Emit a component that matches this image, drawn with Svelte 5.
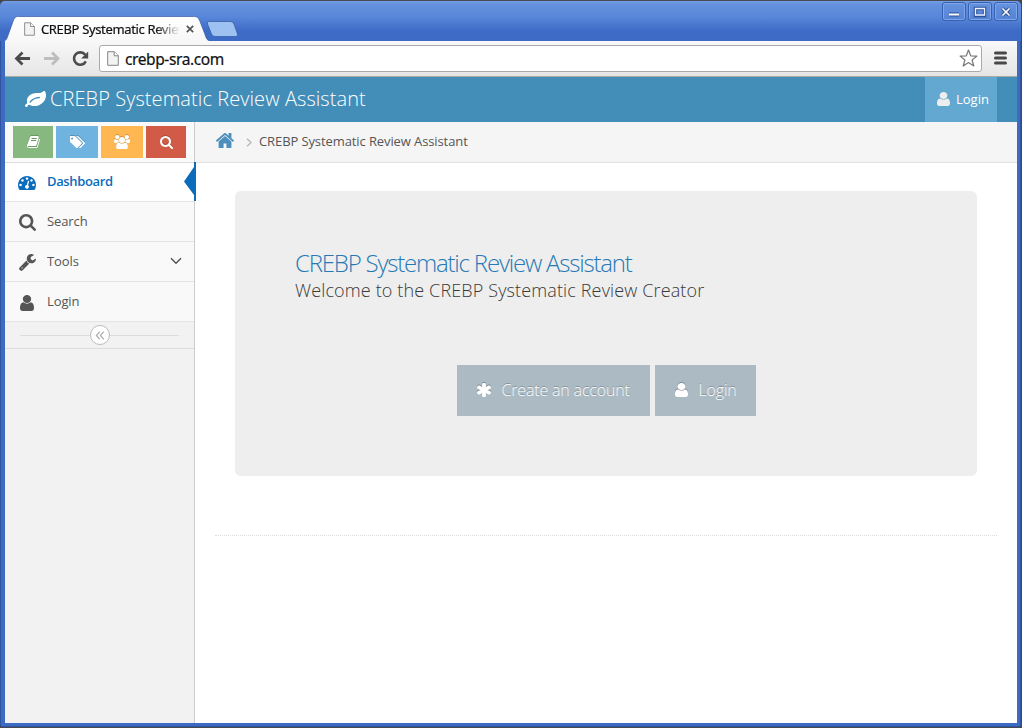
<script>
  const paths = {
    user: 'M1536 1399q0 109-62.5 187t-150.5 78h-854q-88 0-150.5-78t-62.5-187q0-85 8.5-160.5t31.5-152 58.5-131 94-89 134.5-34.5q131 128 313 128t313-128q76 0 134.5 34.5t94 89 58.5 131 31.5 152 8.5 160.5zm-256-887q0 159-112.5 271.5t-271.5 112.5-271.5-112.5-112.5-271.5 112.5-271.5 271.5-112.5 271.5 112.5 112.5 271.5z',
    search: 'M1216 832q0-185-131.5-316.5t-316.5-131.5-316.5 131.5-131.5 316.5 131.5 316.5 316.5 131.5 316.5-131.5 131.5-316.5zm512 832q0 52-38 90t-90 38q-54 0-90-38l-343-342q-179 124-399 124-143 0-273.5-55.5t-225-150-150-225-55.5-273.5 55.5-273.5 150-225 225-150 273.5-55.5 273.5 55.5 225 150 150 225 55.5 273.5q0 220-124 399l343 343q37 37 37 90z',
    dash: 'M384 1152q0-53-37.5-90.5t-90.5-37.5-90.5 37.5-37.5 90.5 37.5 90.5 90.5 37.5 90.5-37.5 37.5-90.5zm192-448q0-53-37.5-90.5t-90.5-37.5-90.5 37.5-37.5 90.5 37.5 90.5 90.5 37.5 90.5-37.5 37.5-90.5zm428 481l101-382q6-26-7.5-48.5t-38.5-29.5-48 6.5-30 39.5l-101 382q-60 5-107 43.5t-63 98.5q-20 77 20 146t117 89 146-20 89-117q16-60-6-117t-72-91zm660-33q0-53-37.5-90.5t-90.5-37.5-90.5 37.5-37.5 90.5 37.5 90.5 90.5 37.5 90.5-37.5 37.5-90.5zm-640-640q0-53-37.5-90.5t-90.5-37.5-90.5 37.5-37.5 90.5 37.5 90.5 90.5 37.5 90.5-37.5 37.5-90.5zm448 192q0-53-37.5-90.5t-90.5-37.5-90.5 37.5-37.5 90.5 37.5 90.5 90.5 37.5 90.5-37.5 37.5-90.5zm320 448q0 261-141 483-19 29-54 29h-1402q-35 0-54-29-141-221-141-483 0-182 71-348t191-286 286-191 348-71 348 71 286 191 191 286 71 348z',
    wrench: 'M448 1472q0-26-19-45t-45-19-45 19-19 45 19 45 45 19 45-19 19-45zm644-420l-682 682q-37 37-90 37-52 0-91-37l-106-108q-38-36-38-90 0-53 38-91l681-681q39 98 114.5 173.5t173.5 114.5zm634-435q0 39-23 106-47 134-164.5 217.5t-258.5 83.5q-185 0-316.5-131.5t-131.5-316.5 131.5-316.5 316.5-131.5q58 0 121.5 16.5t107.5 46.5q16 11 16 28t-16 28l-293 169v224l193 107q5-3 79-48.5t135.5-81 70.5-35.5q15 0 23.5 10t8.5 25z',
    asterisk: 'M1546 1050q46 26 59.5 77.5t-12.5 97.5l-64 110q-26 46-77.5 59.5t-97.5-12.5l-266-153v307q0 52-38 90t-90 38h-128q-52 0-90-38t-38-90v-307l-266 153q-46 26-97.5 12.5t-77.5-59.5l-64-110q-26-46-12.5-97.5t59.5-77.5l266-154-266-154q-46-26-59.5-77.5t12.5-97.5l64-110q26-46 77.5-59.5t97.5 12.5l266 153v-307q0-52 38-90t90-38h128q52 0 90 38t38 90v307l266-153q46-26 97.5-12.5t77.5 59.5l64 110q26 46 12.5 97.5t-59.5 77.5l-266 154z',
    home: 'M1472 992v480q0 26-19 45t-45 19h-384v-384h-256v384h-384q-26 0-45-19t-19-45v-480q0-1 .5-3t.5-3l575-474 575 474q1 2 1 6zm223-69l-62 74q-8 9-21 11h-3q-13 0-21-7l-692-577-692 577q-12 8-24 7-13-2-21-11l-62-74q-8-10-7-23.5t11-21.5l719-599q32-26 76-26t76 26l244 204v-195q0-14 9-23t23-9h192q14 0 23 9t9 23v408l219 182q10 8 11 21.5t-7 23.5z',
    leaf: 'M1280 704q0-26-19-45t-45-19q-172 0-318 49.5t-259.5 134-235.5 219.5q-19 21-19 45 0 26 19 45t45 19q24 0 45-19 27-24 74-71t67-66q137-124 268.5-176t313.5-52q26 0 45-19t19-45zm512-198q0 95-20 193-46 224-184.5 383t-357.5 268q-214 108-438 108-148 0-286-47-15-5-88-42t-96-37q-16 0-39.5 32t-45 70-52.5 70-60 32q-43 0-63.5-17.5t-45.5-59.5q-2-4-6-11t-5.5-10-3-9.5-1.5-13.5q0-35 31-73.5t68-65.5 68-56 31-48q0-4-14-38t-16-44q-9-51-9-104 0-115 43.5-220t119-184.5 170.5-139 204-95.5q55-18 145-25.5t179.5-9 178.5-6 163.5-24 113.5-56.5l29.5-29.5 29.5-28 27-20 36.5-16 43.5-4.5q39 0 70.5 46t47.5 112 24 124 8 96z',
    tags: 'M448 448q0-53-37.5-90.5t-90.5-37.5-90.5 37.5-37.5 90.5 37.5 90.5 90.5 37.5 90.5-37.5 37.5-90.5zm1067 576q0 53-37 90l-491 492q-39 37-91 37-53 0-90-37l-715-716q-38-37-64.5-101t-26.5-117v-416q0-52 38-90t90-38h416q53 0 117 26.5t102 64.5l715 714q37 39 37 91zm384 0q0 53-37 90l-491 492q-39 37-91 37-36 0-59-14t-53-45l470-470q37-37 37-90 0-52-37-91l-715-714q-38-38-102-64.5t-117-26.5h224q53 0 117 26.5t102 64.5l715 714q37 39 37 91z',
    book: 'M1703 478q40 57 18 129l-275 906q-19 64-76.5 107.5t-122.5 43.5h-923q-77 0-148.5-53.5t-99.5-131.5q-24-67-2-127 0-4 3-27t4-37q1-8-3-21.5t-3-19.5q2-11 8-21t16.5-23.5 16.5-23.5q23-38 45-91.5t30-91.5q3-10 .5-30t-.5-28q3-11 17-28t17-23q21-36 42-92t25-90q1-9-2.5-32t.5-28q4-13 22-30.5t22-22.5q19-26 42.5-84.5t27.5-96.5q1-8-3-25.5t-2-26.5q2-8 9-18t18-23 17-21q8-12 16.5-30.5t15-35 16-36 19.5-32 26.5-23.5 36-11.5 47.5 5.5l-1 3q38-9 51-9h761q74 0 114 56t18 130l-274 906q-36 119-71.5 153.5t-128.5 34.5h-869q-27 0-38 15-11 16-1 43 24 70 144 70h923q29 0 56-15.5t35-41.5l300-987q7-22 5-57 38 15 59 43zm-1064 2q-4 13 2 22.5t20 9.5h608q13 0 25.5-9.5t16.5-22.5l21-64q4-13-2-22.5t-20-9.5h-608q-13 0-25.5 9.5t-16.5 22.5zm-83 256q-4 13 2 22.5t20 9.5h608q13 0 25.5-9.5t16.5-22.5l21-64q4-13-2-22.5t-20-9.5h-608q-13 0-25.5 9.5t-16.5 22.5z',
    users: 'M657 896q-162 5-265 128h-134q-82 0-138-40.5t-56-118.5q0-353 124-353 6 0 43.5 21t97.5 42.5 119 21.5q67 0 133-23-5 37-5 66 0 159 93 290zm1071 637q0 120-73 189.5t-194 69.5h-874q-121 0-194-69.5t-73-189.5q0-53 3.5-103.5t14-109 26.5-108.5 43-97.5 62-81 85.5-53.5 111.5-20q10 0 43 21.5t73 48 107 48 135 21.5 135-21.5 107-48 73-48 43-21.5q61 0 111.5 20t85.5 53.5 62 81 43 97.5 26.5 108.5 14 109 3.5 103.5zm-1024-1277q0 106-75 181t-181 75-181-75-75-181 75-181 181-75 181 75 75 181zm704 384q0 159-112.5 271.5t-271.5 112.5-271.5-112.5-112.5-271.5 112.5-271.5 271.5-112.5 271.5 112.5 112.5 271.5zm576 225q0 78-56 118.5t-138 40.5h-134q-103-123-265-128 93-131 93-290 0-29-5-66 66 23 133 23 59 0 119-21.5t97.5-42.5 43.5-21q124 0 124 353zm-128-609q0 106-75 181t-181 75-181-75-75-181 75-181 181-75 181 75 75 181z'
  };
  const boxes = {
    user: '256 128 1280 1536', search: '64 128 1664 1664', dash: '0 256 1792 1408',
    wrench: '84 128 1642 1643', asterisk: '182 128 1428 1536', home: '89 253 1614 1283',
    leaf: '0 128 1792 1408', tags: '64 128 1835 1515', book: '64 128 1664 1536', users: '64 0 1920 1792'
  };
  const shortcuts = [
    { icon: 'book', cls: 'green', w: 13, h: 12 },
    { icon: 'tags', cls: 'blue', w: 15, h: 12 },
    { icon: 'users', cls: 'orange', w: 16, h: 14 },
    { icon: 'search', cls: 'red', w: 13, h: 13 }
  ];
  const nav = [
    { icon: 'dash', label: 'Dashboard', w: 18, h: 14, active: true },
    { icon: 'search', label: 'Search', w: 17, h: 17 },
    { icon: 'wrench', label: 'Tools', w: 17, h: 17, sub: true },
    { icon: 'user', label: 'Login', w: 14, h: 16 }
  ];
</script>

{#snippet icon(name, w, h)}
  <svg class="icon" width={w} height={h} viewBox={boxes[name]} preserveAspectRatio="none"><path d={paths[name]} /></svg>
{/snippet}

{#snippet page()}
  <svg class="page" width="12" height="15" viewBox="0 0 12 15"><path d="M.7.7h6.600l4 4v9.600H.7z" fill="#f3f3f3" stroke="#858585" /><path d="M7.200.8v4h4" fill="#fff" stroke="#858585" /></svg>
{/snippet}

<div class="window">
  <div class="titlebar">
    <svg class="tabshape" width="245" height="41" viewBox="0 0 245 41">
      <defs><linearGradient id="tab" x2="0" y2="1"><stop offset="0" stop-color="#fff" /><stop offset="1" stop-color="#f7f7f7" /></linearGradient></defs>
      <path d="M4.500 41.500C8 40 8 38 9 35.500L14 21.500C15.500 17.500 16.500 16.500 19.500 16.500H194.500C198 16.500 199.500 17.500 201 21.500L206 34.500C207.500 39 208 40.500 212.500 41.500Z" fill="url(#tab)" stroke="#2f539b" stroke-opacity=".65" />
      <path d="M210 21.500H231.500Q234 21.500 235 24L238.500 34Q239 36.500 236.500 36.500H216Q213.500 36.500 212.500 34L208.500 24Q207.700 21.500 210 21.500Z" fill="#9dc2f2" stroke="#345aa5" stroke-opacity=".75" />
    </svg>
    <div class="tab">
      {@render page()}
      <span class="tabtitle">CREBP Systematic Review</span>
      <svg class="close" width="8" height="8" viewBox="0 0 8 8"><path d="M.8.8l6.400 6.400M7.200.8L.8 7.200" stroke="#555" stroke-width="1.700" /></svg>
    </div>
    <div class="controls">
      <span><svg width="22" height="16" viewBox="0 0 22 16"><path d="M6 10.500h10" stroke="#2f5299" stroke-width="4" /><path d="M6 10.500h10" stroke="#fff" stroke-width="2" /></svg></span>
      <span><svg width="22" height="16" viewBox="0 0 22 16"><path d="M6.500 4.500h9v7h-9z" fill="none" stroke="#2f5299" stroke-width="3.500" /><path d="M6.500 4.500h9v6.500h-9z" fill="none" stroke="#edf4ff" stroke-width="1.300" /></svg></span>
      <span><svg width="22" height="16" viewBox="0 0 22 16"><path d="M7.500 4.500l7 7m0-7l-7 7" stroke="#2f5299" stroke-width="3.800" /><path d="M7.500 4.500l7 7m0-7l-7 7" stroke="#fff" stroke-width="1.600" /></svg></span>
    </div>
  </div>

  <div class="toolbar">
    <svg width="90" height="34" viewBox="0 0 90 34" fill="none" stroke-width="2.800">
      <path d="M11 17.500h14M17.500 11.500l-6 6 6 6" stroke="#4b4b4b" />
      <path d="M39 17.500h14M47 11.500l6 6-6 6" stroke="#bdbdbd" />
      <path d="M80.800 20.300a6.200 6.200 0 1 1-.6-6.500" stroke="#4b4b4b" stroke-width="2.600" />
      <path d="M83.200 10.500v7h-7z" fill="#4b4b4b" />
    </svg>
    <div class="address">
      {@render page()}
      <span>crebp-sra.com</span>
      <svg class="star" width="19" height="18" viewBox="0 0 19 18"><path d="M9.500 1l2.200 5.800 6.200.3-4.800 3.900 1.700 6-5.300-3.400L4.200 17l1.700-6L1.100 7.100l6.200-.3z" fill="#fff" stroke="#777" stroke-width="1.200" stroke-linejoin="round" /></svg>
    </div>
    <svg class="menu" width="13" height="14" viewBox="0 0 13 14"><path d="M1.500 2h10M1.500 7h10M1.500 12h10" stroke="#484848" stroke-width="3" stroke-linecap="round" /></svg>
  </div>

  <div class="app">
    <header>
      <div class="brand">{@render icon('leaf', 21, 16)}<span>CREBP Systematic Review Assistant</span></div>
      <div class="login">{@render icon('user', 13, 14)}<span>Login</span></div>
    </header>
    <div class="body">
      <aside>
        <div class="shortcuts">
          {#each shortcuts as s}
            <div class="short {s.cls}">{@render icon(s.icon, s.w, s.h)}</div>
          {/each}
        </div>
        {#each nav as n}
          <div class="item" class:active={n.active}>
            <div class="ico">{@render icon(n.icon, n.w, n.h)}</div>
            <span>{n.label}</span>
            {#if n.sub}<svg class="chev" width="12" height="8" viewBox="0 0 12 8"><path d="M1 1.200l5 5 5-5" fill="none" stroke="#555" stroke-width="1.500" /></svg>{/if}
            {#if n.active}<svg class="arrow" width="12" height="39" viewBox="0 0 12 39"><path d="M12 0h-2v5L0 19.500 10 33v6h2z" fill="#0b6cbc" /></svg>{/if}
          </div>
        {/each}
        <div class="collapse"><div class="knob"><svg width="10" height="9" viewBox="0 0 10 9"><path d="M4.800.7L1.400 4.500l3.400 3.800M8.800.7L5.400 4.500l3.400 3.800" fill="none" stroke="#aaa" stroke-width="1.200" /></svg></div></div>
      </aside>
      <main>
        <div class="crumbs">
          {@render icon('home', 18, 15)}
          <svg class="sep" width="6" height="9" viewBox="0 0 6 9"><path d="M1 .7l4 3.800-4 3.800" fill="none" stroke="#b2b6bf" stroke-width="1.300" /></svg>
          <span>CREBP Systematic Review Assistant</span>
        </div>
        <section class="hero">
          <h1>CREBP Systematic Review Assistant</h1>
          <p>Welcome to the CREBP Systematic Review Creator</p>
          <div class="buttons">
            <div class="btn create">{@render icon('asterisk', 14, 14)}<span>Create an account</span></div>
            <div class="btn enter">{@render icon('user', 13, 14)}<span>Login</span></div>
          </div>
        </section>
        <div class="rule"></div>
      </main>
    </div>
  </div>
</div>

<style>
  :global(body) { margin: 0; background: #444; overflow: hidden; }
  * { box-sizing: border-box; }
  svg { display: block; flex: none; }
  .icon { fill: currentColor; }
  .window { width: 1022px; height: 728px; padding: 0 4px 4px 5px; display: flex; flex-direction: column; font-family: "Open Sans", sans-serif; font-size: 13px; color: #555;
    background: #3d6bc3; border: solid #484a50; border-width: 1px 1px 1px 0; border-radius: 5px 5px 3px 3px; box-shadow: inset 1px 0 #30549f, inset -1px 0 #30549f, inset 0 -1px #30549f; }
  .titlebar { height: 40px; margin: 0 -4px 0 -5px; flex: none; position: relative; display: flex; justify-content: space-between; background: linear-gradient(#73a0e6, #6591dd 8%, #5886d8 40%, #3e6bc6 75%, #3e6bc6); border-radius: 5px 5px 0 0; }
  .tabshape { position: absolute; left: -1px; top: -1px; }
  .tab { position: relative; display: flex; align-items: center; height: 26px; margin: 15px 0 0 24px; color: #111; }
  .page { width: 11px; height: 14px; }
  .tabtitle { font-family: "Noto Sans", sans-serif; font-size: 13px; letter-spacing: -.35px; width: 139px; margin-left: 6px; overflow: hidden; white-space: nowrap; line-height: 20px; -webkit-mask-image: linear-gradient(90deg, #000 115px, transparent 139px); mask-image: linear-gradient(90deg, #000 115px, transparent 139px); -webkit-text-stroke: .2px #111; }
  .close { margin-left: 6px; }
  .controls { display: flex; gap: 4px; padding: 2px 4px 0 0; }
  .controls span { width: 22px; height: 17px; border: 1px solid #82a7e8; border-radius: 2px; outline: 1px solid #3560b4; display: flex; align-items: center; justify-content: center; }
  .toolbar { height: 36px; flex: none; display: flex; align-items: center; padding: 0 10px 1px 0; background: linear-gradient(#f8f8f8, #e5e5e5); border-bottom: 1px solid #aaa9a5; }
  .address { flex: 1; margin-left: 4px; height: 27px; border: 1px solid #aaa; border-radius: 3px; background: #fff; display: flex; align-items: center; padding: 0 3px 0 7px; color: #111; font: 15.500px "Noto Sans", sans-serif; letter-spacing: -.4px; -webkit-text-stroke: .2px #111; }
  .address .page { width: 12px; height: 15px; }
  .address span { margin-left: 6px; flex: 1; line-height: 20px; padding-top: 1px; }
  .menu { margin-left: 12px; }
  .app { flex: 1; display: flex; flex-direction: column; background: #fff; min-height: 0; }
  header { height: 45px; flex: none; display: flex; justify-content: space-between; background: #438eb9; color: #fff; padding: 0 20px; }
  .brand { display: flex; align-items: center; font-size: 20px; font-weight: 300; gap: 4px; letter-spacing: .07px; padding-bottom: 2px; }
  .brand span { padding-bottom: 1px; }
  .login { width: 72px; background: #62a8d1; display: flex; align-items: center; padding: 0 0 2px 12px; gap: 6px; }
  .login .icon { color: #eee; }
  .body { flex: 1; display: flex; min-height: 0; }
  aside { width: 190px; background: #f2f2f2; border-right: 1px solid #ccc; }
  .shortcuts { height: 41px; background: #fafafa; border-bottom: 1px solid #ddd; padding: 4px 8px 0; display: flex; gap: 3px; }
  .short { width: 42px; height: 32px; display: flex; align-items: center; justify-content: center; color: #fff; }
  .short .icon { filter: drop-shadow(0 -1px 0 rgba(0, 0, 0, .2)); }
  .short.green { width: 40px; background: #87b87f; }
  .short.blue { background: #6fb3e0; }
  .short.orange { background: #ffb752; }
  .short.red { width: 40px; background: #d15b47; }
  .item { position: relative; height: 40px; border-bottom: 1px solid #e4e4e4; background: #f9f9f9; display: flex; align-items: center; padding-bottom: 1px; }
  .item.active { height: 39px; background: #fff; color: #0b6cbc; }
  .item .ico { width: 18px; margin: 3px 11px 0 13px; display: flex; justify-content: center; }
  .item span { letter-spacing: -.1px; }
  .item.active .ico { margin-top: 3px; }
  .item.active span { font-weight: 600; letter-spacing: -.35px; padding-bottom: 2px; }
  .chev { margin: 0 12px 0 auto; }
  .arrow { position: absolute; right: -2px; top: -1px; }
  .collapse { height: 27px; border-bottom: 1px solid #ddd; display: flex; align-items: center; justify-content: center; background: linear-gradient(#ddd, #ddd) 15px 13px / 159px 1px no-repeat; }
  .knob { width: 20px; height: 20px; border: 1px solid #bbb; border-radius: 50%; background: #fff; display: flex; align-items: center; justify-content: center; }
  main { flex: 1; min-width: 0; }
  .crumbs { height: 41px; background: #f5f5f5; border-bottom: 1px solid #e3e3e3; display: flex; align-items: center; padding: 0 0 2px 21px; letter-spacing: -.1px; }
  .crumbs .icon { color: #4c8fbd; margin-top: -1px; }
  .crumbs .sep { margin: 2px 7px 0 12px; }
  .hero { margin: 28px 40px 0; height: 285px; border-radius: 6px; background: #eee; padding: 59px 60px; }
  h1 { margin: 0; font-size: 24px; line-height: 25px; font-weight: 300; letter-spacing: -1.200px; color: #2679b5; white-space: nowrap; }
  p { margin: 0; font-size: 18px; line-height: 27px; font-weight: 300; color: #393939; padding-top: 2px; letter-spacing: .135px; white-space: nowrap; }
  .buttons { display: flex; justify-content: center; gap: 5px; margin-top: 61px; }
  .btn { height: 51px; background: #abbac3; color: #fff; font-size: 16px; font-weight: 300; display: flex; align-items: center; padding: 0 0 1px 20px; gap: 11px; letter-spacing: -.17px; text-shadow: 0 -1px 0 rgba(0, 0, 0, .25); white-space: nowrap; }
  .btn span { padding-bottom: 1px; }
  .btn .icon { filter: drop-shadow(0 -1px 0 rgba(0, 0, 0, .25)); }
  .create { width: 193px; }
  .enter { width: 101px; }
  .rule { margin: 59px 20px 0; border-top: 1px dotted #ddd; }
</style>
